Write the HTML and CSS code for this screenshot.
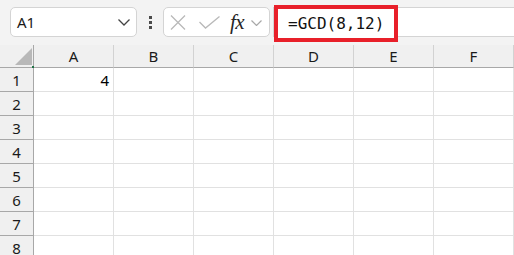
FILE: index.html
```html
<!DOCTYPE html>
<html>
<head>
<meta charset="utf-8">
<link rel="stylesheet" href="styles.css">
</head>
<body>
<div class="toolbar">
  <div class="namebox">
    <span class="name">A1</span>
    <svg class="chev" width="12" height="7" viewBox="0 0 12 7"><polyline points="0.5,0.5 6,6 11.5,0.5" fill="none" stroke="#444" stroke-width="1.3"/></svg>
  </div>
  <div class="dots"><i></i><i></i><i></i></div>
  <div class="fxbox">
    <svg class="ic-x" width="16" height="15" viewBox="0 0 16 15"><path d="M1 0.5 L15 14.5 M15 0.5 L1 14.5" stroke="#b9b9b9" stroke-width="1.3" fill="none"/></svg>
    <svg class="ic-ok" width="21" height="13" viewBox="0 0 21 13"><polyline points="0.5,6 6.5,12 20.5,0.5" fill="none" stroke="#b9b9b9" stroke-width="1.3"/></svg>
    <span class="fx">fx</span>
    <svg class="ic-chev" width="11" height="6" viewBox="0 0 11 6"><polyline points="0.5,0.5 5.5,5.5 10.5,0.5" fill="none" stroke="#a8a8a8" stroke-width="1.2"/></svg>
  </div>
  <div class="formula">
    <span class="hl">=GCD(8,12)</span>
  </div>
</div>
<div class="sheet">
  <div class="corner"><span class="tri"></span><span class="sel"></span></div>
  <div class="ch">A</div><div class="ch">B</div><div class="ch">C</div><div class="ch">D</div><div class="ch">E</div><div class="ch">F</div>

  <div class="rh">1</div><div class="c num">4</div><div class="c"></div><div class="c"></div><div class="c"></div><div class="c"></div><div class="c"></div>
  <div class="rh">2</div><div class="c"></div><div class="c"></div><div class="c"></div><div class="c"></div><div class="c"></div><div class="c"></div>
  <div class="rh">3</div><div class="c"></div><div class="c"></div><div class="c"></div><div class="c"></div><div class="c"></div><div class="c"></div>
  <div class="rh">4</div><div class="c"></div><div class="c"></div><div class="c"></div><div class="c"></div><div class="c"></div><div class="c"></div>
  <div class="rh">5</div><div class="c"></div><div class="c"></div><div class="c"></div><div class="c"></div><div class="c"></div><div class="c"></div>
  <div class="rh">6</div><div class="c"></div><div class="c"></div><div class="c"></div><div class="c"></div><div class="c"></div><div class="c"></div>
  <div class="rh">7</div><div class="c"></div><div class="c"></div><div class="c"></div><div class="c"></div><div class="c"></div><div class="c"></div>
  <div class="rh">8</div><div class="c"></div><div class="c"></div><div class="c"></div><div class="c"></div><div class="c"></div><div class="c"></div>
</div>
</body>
</html>
```

FILE: styles.css
```css
html, body {
  margin: 0;
  padding: 0;
  width: 514px;
  height: 255px;
  overflow: hidden;
  background: #ffffff;
  font-family: "Noto Sans", "Open Sans", sans-serif;
  color: #000;
}

.toolbar {
  height: 45px;
  box-sizing: border-box;
  background: #f3f3f3;
  display: flex;
  align-items: flex-start;
  padding: 7px 0 0 10px;
}

.namebox {
  width: 127px;
  height: 30px;
  box-sizing: border-box;
  border: 1px solid #d4d4d4;
  border-radius: 5px;
  background: #fff;
  display: flex;
  align-items: center;
  padding: 0 6px 0 6px;
}

.name {
  font-size: 15px;
  color: #1a1a1a;
  flex: 1;
}

.chev { display: block; margin-top: 1px; }

.dots {
  margin-left: 12px;
  margin-top: 9px;
  display: flex;
  flex-direction: column;
  gap: 2px;
}
.dots i {
  display: block;
  width: 3px;
  height: 3px;
  background: #4a4a4a;
}

.fxbox {
  margin-left: 11px;
  width: 107px;
  height: 30px;
  box-sizing: border-box;
  border: 1px solid #d4d4d4;
  border-radius: 5px;
  background: #fff;
  display: flex;
  align-items: center;
  padding-left: 6px;
}
.ic-x { display: block; }
.ic-ok { display: block; margin-left: 13px; }
.fx {
  margin-left: 10px;
  font-family: "Liberation Serif", "DejaVu Serif", serif;
  font-style: italic;
  font-size: 21px;
  line-height: 28px;
  color: #262626;
  letter-spacing: -0.5px;
}
.ic-chev { display: block; margin-left: 7px; margin-top: 2px; }

.formula {
  margin-left: 3px;
  flex: 1;
  height: 30px;
  box-sizing: border-box;
  border: 1px solid #d4d4d4;
  border-right: none;
  background: #fff;
  display: flex;
  align-items: flex-start;
}

.hl {
  margin-top: -3px;
  width: 124px;
  height: 37px;
  box-sizing: border-box;
  border: 4px solid #e8202a;
  background: #fff;
  padding-left: 10px;
  font-family: "DejaVu Sans Mono", "Liberation Mono", monospace;
  font-size: 16px;
  line-height: 29px;
  color: #111;
}

.sheet {
  display: grid;
  grid-template-columns: 34px repeat(6, 80px);
  grid-template-rows: 23px;
  grid-auto-rows: 24px;
}

.sheet > div {
  box-sizing: border-box;
  font-size: 15px;
}

.corner {
  position: relative;
  background: #f0f0f0;
  border-right: 1px solid #a8a8a8;
  border-bottom: 1px solid #a8a8a8;
}
.tri {
  position: absolute;
  right: 1px;
  bottom: 2px;
  width: 0;
  height: 0;
  border-left: 17px solid transparent;
  border-bottom: 17px solid #b8b8b8;
}
.sel {
  position: absolute;
  right: -1px;
  bottom: -1px;
  width: 2px;
  height: 2px;
  background: #217346;
}

.ch {
  background: #f0f0f0;
  border-right: 1px solid #d2d2d2;
  border-bottom: 1px solid #a8a8a8;
  text-align: center;
  line-height: 22px;
  color: #1a1a1a;
}

.rh {
  background: #f0f0f0;
  border-right: 1px solid #a8a8a8;
  border-bottom: 1px solid #a8a8a8;
  text-align: center;
  line-height: 25px;
  color: #1a1a1a;
}

.c {
  border-right: 1px solid #e1e1e1;
  border-bottom: 1px solid #e1e1e1;
  line-height: 25px;
}

.num {
  text-align: right;
  padding-right: 4px;
}
```
